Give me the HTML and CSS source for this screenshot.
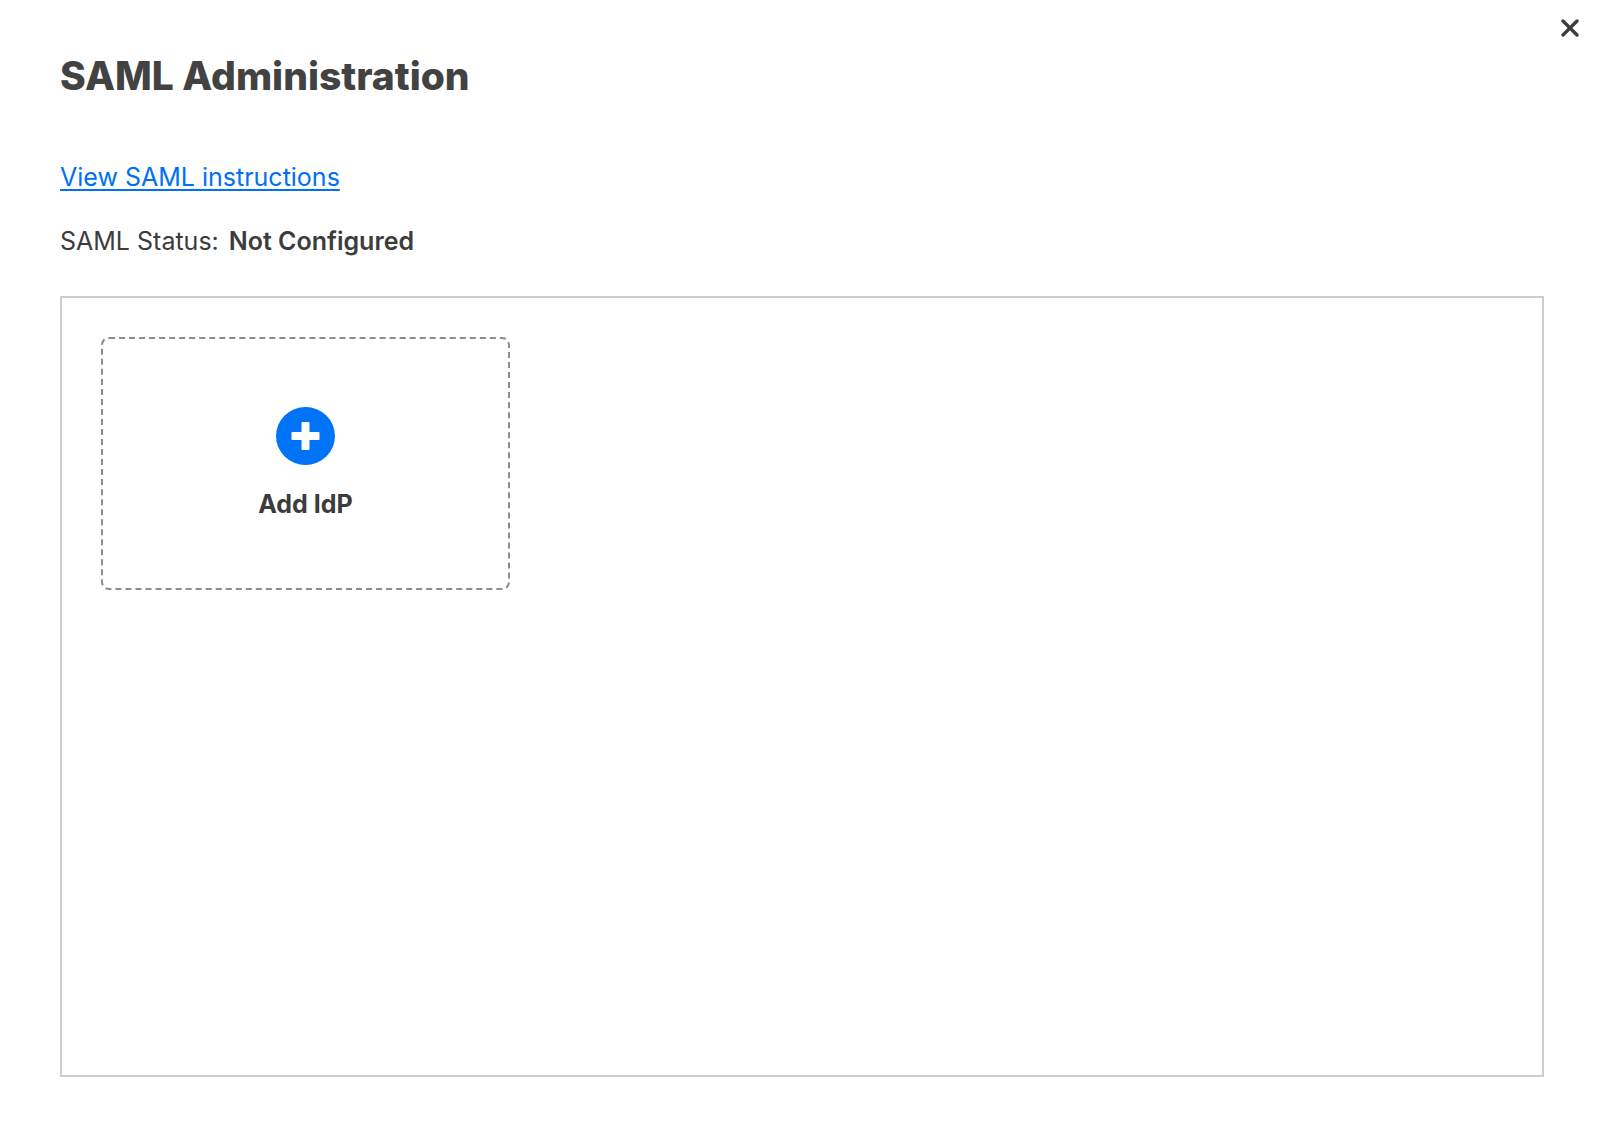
FILE: index.html
```html
<!DOCTYPE html>
<html lang="en">
<head>
<meta charset="utf-8">
<meta name="viewport" content="width=device-width, initial-scale=1">
<title>SAML Administration</title>
<link rel="stylesheet" href="styles.css">
</head>
<body>
<main class="dialog">
  <button class="close" type="button" aria-label="Close">
    <svg width="18" height="18" viewBox="0 0 18 18" aria-hidden="true"><path d="M2 2 16 16M16 2 2 16" stroke="currentColor" stroke-width="3.3" stroke-linecap="round" fill="none"/></svg>
  </button>
  <h1 class="title">SAML Administration</h1>
  <a class="link" href="#instructions">View SAML instructions</a>
  <p class="status"><span>SAML Status:</span><strong class="status-value">Not Configured</strong></p>
  <section class="providers" aria-label="Identity providers">
    <button class="add-card" type="button">
      <svg class="add-icon" width="59" height="58" viewBox="0 0 59 58" aria-hidden="true">
        <ellipse cx="29.5" cy="29" rx="29.5" ry="29" fill="#0073f7"/>
        <rect x="25.5" y="15" width="8" height="28" rx="1" fill="#fff"/>
        <rect x="15.5" y="25" width="28" height="8" rx="1" fill="#fff"/>
      </svg>
      <span>Add IdP</span>
    </button>
  </section>
</main>
</body>
</html>
```
FILE: styles.css
```css
* { box-sizing: border-box; }

body {
  margin: 0;
  background: #fff;
  color: #3c3c3c;
  font-family: Inter, "Liberation Sans", sans-serif;
  font-size: 25px;
  line-height: 32px;
}

.dialog {
  position: relative;
  display: flex;
  flex-direction: column;
  align-items: flex-start;
  min-height: 100vh;
  padding: 52px 56px 56px 60px;
}

.close {
  position: absolute;
  top: 14px;
  right: 16px;
  display: grid;
  place-items: center;
  width: 28px;
  height: 28px;
  padding: 0;
  border: 0;
  background: none;
  color: #3c3c3c;
  cursor: pointer;
}

.title {
  margin: 0 0 61px;
  color: #424242;
  font-size: 39px;
  font-weight: 800;
  line-height: 48px;
}

.link {
  margin-bottom: 32px;
  color: #0070f5;
  text-decoration: underline;
  text-decoration-thickness: 2px;
  text-underline-offset: 3px;
}

.status {
  display: flex;
  gap: 10px;
  margin: 0 0 39px;
}

.status-value { font-weight: 600; }

.providers {
  flex: 1;
  align-self: stretch;
  padding: 39px;
  border: 2px solid #ccc;
}

.add-card {
  display: flex;
  flex-direction: column;
  align-items: center;
  justify-content: center;
  gap: 23px;
  width: 409px;
  max-width: 100%;
  height: 253px;
  padding: 0;
  border: 2px dashed #8c8c8c;
  border-radius: 8px;
  background: none;
  color: #3c3c3c;
  font: inherit;
  font-weight: 700;
  cursor: pointer;
}

.add-icon { display: block; }
```
